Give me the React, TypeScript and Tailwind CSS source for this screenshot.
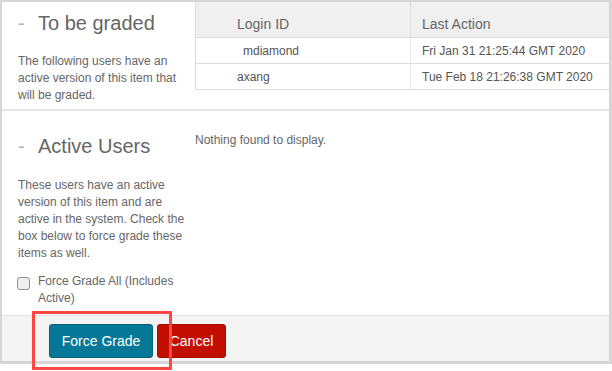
import React from "react";

const rows = [
  { login: "mdiamond", pad: "pl-[47px]", last: "Fri Jan 31 21:25:44 GMT 2020" },
  { login: "axang", pad: "pl-[41px]", last: "Tue Feb 18 21:26:38 GMT 2020" },
];

const Heading = ({ title }: { title: string }) => (
  <h2 className="flex text-[20px] leading-[24px] text-[#666]">
    <span className="w-[20px] text-[#b5b5b5]">-</span>
    <span>{title}</span>
  </h2>
);

export default function App() {
  return (
    <div className="relative w-[612px] h-[371px] bg-white font-['Liberation_Sans',Arial,sans-serif]">
      <div className="flex flex-col w-[612px] h-[364px] border-t-2 border-l-2 border-r-[3px] border-b-[3px] border-[#d6d6d6]">
        {/* to be graded */}
        <div className="flex h-[109px] border-b-2 border-[#e6e6e6]">
          <div className="w-[193px] pl-[16px] pt-[9px]">
            <Heading title="To be graded" />
            <p className="mt-[18px] w-[172px] text-[12px] leading-[17px] text-[#666]">
              The following users have an active version of this item that will be graded.
            </p>
          </div>
          <div className="flex-1 self-start border-l border-[#dcdcdc]">
            <div className="flex h-[36px] bg-[#f0f0f0] border-b border-[#dcdcdc] text-[14px] leading-[20px] text-[#666]">
              <div className="w-[215px] pl-[41px] pt-[12px] border-r border-[#dcdcdc]">Login ID</div>
              <div className="flex-1 pl-[11px] pt-[12px]">Last Action</div>
            </div>
            {rows.map((r) => (
              <div key={r.login} className="flex h-[26px] border-b border-[#dcdcdc] text-[12px] text-[#555]">
                <div className={`w-[215px] ${r.pad} flex items-center border-r border-[#e6e6e6]`}>{r.login}</div>
                <div className="flex-1 pl-[11px] flex items-center">{r.last}</div>
              </div>
            ))}
          </div>
        </div>

        {/* active users */}
        <div className="flex h-[204px]">
          <div className="w-[193px] pl-[16px] pt-[23px]">
            <Heading title="Active Users" />
            <p className="mt-[19px] w-[172px] text-[12px] leading-[17px] text-[#666]">
              These users have an active version of this item and are active in the system. Check the box below to force grade these items as well.
            </p>
            <label className="mt-[11px] flex text-[12px] leading-[17px] text-[#666]">
              <span className="mt-[4px] ml-[-1px] w-[13px] h-[13px] shrink-0 rounded-[3px] border border-[#8f8f8f] bg-[#efefef]" />
              <span className="ml-[8px] w-[150px]">Force Grade All (Includes Active)</span>
            </label>
          </div>
          <div className="flex-1 pt-[21px] text-[12px] leading-[17px] text-[#666]">Nothing found to display.</div>
        </div>

        {/* footer */}
        <div className="flex flex-1 items-start gap-[4px] pl-[47px] pt-[8px] bg-[#f4f4f4] border-t border-[#e0e0e0]">
          <button className="w-[104px] h-[34px] rounded-[3px] border border-[#05627a] bg-[#047896] text-[14px] text-white">
            Force Grade
          </button>
          <button className="w-[69px] h-[34px] rounded-[3px] border border-[#a30d00] bg-[#c20e00] text-[14px] text-white">
            Cancel
          </button>
        </div>
      </div>

      {/* annotation */}
      <div className="absolute left-[32px] top-[311px] w-[140px] h-[59px] border-[3px] border-[#ff4646]" />
    </div>
  );
}
